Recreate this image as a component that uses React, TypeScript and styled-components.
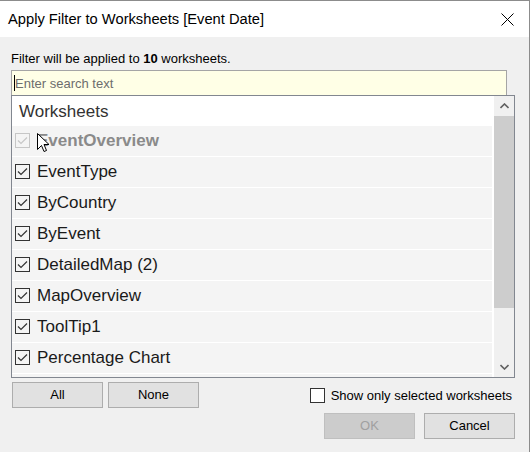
import React from "react";
import styled, { createGlobalStyle } from "styled-components";

const Global = createGlobalStyle`
  html, body { margin: 0; padding: 0; background: #ffffff; }
  body { font-family: "Liberation Sans", Arial, sans-serif; }
  * { box-sizing: border-box; }
`;

const Window = styled.div`
  width: 530px;
  height: 452px;
  border-top: 1px solid #8c8c8c;
  border-right: 1px solid #8c8c8c;
  display: flex;
  flex-direction: column;
  background: #ffffff;
`;

const TitleBar = styled.div`
  height: 36px;
  flex-shrink: 0;
  display: flex;
  align-items: center;
  justify-content: space-between;
  padding-left: 8px;
  background: #ffffff;
  color: #000;
  font-size: 14.7px;
`;

const CloseButton = styled.div`
  width: 44px;
  height: 36px;
  display: flex;
  align-items: center;
  justify-content: center;
`;

const Body = styled.div`
  flex: 1;
  background: #f0f0f0;
  padding: 14px 14px 0 11px;
  display: flex;
  flex-direction: column;
`;

const Info = styled.div`
  font-size: 13px;
  line-height: 16px;
  color: #000;
  margin-bottom: 3px;
  b { font-weight: bold; }
`;

const Search = styled.div`
  height: 26px;
  margin-right: 8px;
  border: 1px solid #a5a5a5;
  background: #ffffe6;
  display: flex;
  align-items: center;
  padding-left: 2px;
  font-size: 13px;
`;

const Caret = styled.span`
  width: 1px;
  height: 16px;
  background: #000;
`;

const Placeholder = styled.span`
  color: #6d6d6d;
`;

const List = styled.div`
  position: relative;
  height: 283px;
  margin-top: -1px;
  border: 1px solid #828790;
  display: flex;
  overflow: hidden;
  background: #ffffff;
`;

const ListContent = styled.div`
  flex: 1;
  padding-right: 2px;
  display: flex;
  flex-direction: column;
  overflow: hidden;
  background: #ffffff;
`;

const Header = styled.div`
  height: 30px;
  flex-shrink: 0;
  display: flex;
  align-items: center;
  padding: 2px 0 0 7px;
  font-size: 17px;
  color: #333333;
  background: #ffffff;
`;

const Row = styled.div<{ $disabled?: boolean }>`
  height: 31px;
  flex-shrink: 0;
  display: flex;
  align-items: center;
  gap: 7px;
  padding: 0 0 0 3px;
  background: #f4f4f4;
  border-bottom: 1px solid #ffffff;
  font-size: 17px;
  color: ${(p) => (p.$disabled ? "#8a8a8a" : "#1a1a1a")};
  font-weight: ${(p) => (p.$disabled ? "bold" : "normal")};
`;

const Box = styled.span<{ $disabled?: boolean; $white?: boolean }>`
  width: 15px;
  height: 15px;
  flex-shrink: 0;
  margin-top: ${(p) => (p.$white ? "0" : "-2px")};
  border: 1px solid ${(p) => (p.$disabled ? "#c6c6c6" : "#333333")};
  background: ${(p) => (p.$white ? "#ffffff" : "transparent")};
  display: flex;
  align-items: center;
  justify-content: center;
`;

const ScrollBar = styled.div`
  width: 20px;
  flex-shrink: 0;
  background: #f0f0f0;
  display: flex;
  flex-direction: column;
`;

const ArrowBtn = styled.div`
  height: 20px;
  flex-shrink: 0;
  display: flex;
  align-items: center;
  justify-content: center;
`;

const Thumb = styled.div`
  height: 192px;
  background: #cdcdcd;
`;

const Spacer = styled.div`
  flex: 1;
`;

const Pointer = styled.svg`
  position: absolute;
  left: 25px;
  top: 37px;
`;

const Footer = styled.div`
  margin-top: 4px;
  display: flex;
  flex-direction: column;
  gap: 5px;
`;

const FooterRow = styled.div<{ $end?: boolean }>`
  display: flex;
  align-items: center;
  justify-content: ${(p) => (p.$end ? "flex-end" : "space-between")};
  padding-right: ${(p) => (p.$end ? "0" : "3px")};
  padding-left: ${(p) => (p.$end ? "0" : "1px")};
`;

const ButtonGroup = styled.div`
  display: flex;
  gap: 5px;
`;

const EndGroup = styled.div`
  display: flex;
  gap: 9px;
`;

const Button = styled.div<{ $disabled?: boolean }>`
  width: 91px;
  height: 26px;
  display: flex;
  align-items: center;
  justify-content: center;
  font-size: 13px;
  line-height: 16px;
  background: ${(p) => (p.$disabled ? "#cccccc" : "#e1e1e1")};
  border: 1px solid ${(p) => (p.$disabled ? "#bfbfbf" : "#adadad")};
  color: ${(p) => (p.$disabled ? "#a0a0a0" : "#000000")};
`;

const CheckLabel = styled.div`
  display: flex;
  align-items: center;
  gap: 6px;
  font-size: 13px;
  color: #000;
`;

const Check = ({ color }: { color: string }) => (
  <svg width="13" height="13" viewBox="0 0 13 13">
    <polyline points="2,6.5 5,9.5 11,3.5" fill="none" stroke={color} strokeWidth="1.2" />
  </svg>
);

const Chevron = ({ up }: { up?: boolean }) => (
  <svg width="9" height="6" viewBox="0 0 9 6">
    <polyline
      points={up ? "0.5,5 4.5,1 8.5,5" : "0.5,1 4.5,5 8.5,1"}
      fill="none"
      stroke="#606060"
      strokeWidth="1.6"
    />
  </svg>
);

const items = [
  "EventType",
  "ByCountry",
  "ByEvent",
  "DetailedMap (2)",
  "MapOverview",
  "ToolTip1",
  "Percentage Chart",
];

export default function App() {
  return (
    <>
      <Global />
      <Window>
        <TitleBar>
          <span>Apply Filter to Worksheets [Event Date]</span>
          <CloseButton>
            <svg width="13" height="13" viewBox="0 0 13 13">
              <path d="M0.5 0.5 L12.5 12.5 M12.5 0.5 L0.5 12.5" stroke="#000" strokeWidth="1" />
            </svg>
          </CloseButton>
        </TitleBar>
        <Body>
          <Info>
            Filter will be applied to <b>10</b> worksheets.
          </Info>
          <Search>
            <Caret />
            <Placeholder>Enter search text</Placeholder>
          </Search>
          <List>
            <ListContent>
              <Header>Worksheets</Header>
              <Row $disabled>
                <Box $disabled>
                  <Check color="#c6c6c6" />
                </Box>
                <span>EventOverview</span>
              </Row>
              {items.map((it) => (
                <Row key={it}>
                  <Box>
                    <Check color="#333333" />
                  </Box>
                  <span>{it}</span>
                </Row>
              ))}
              <Row />
            </ListContent>
            <ScrollBar>
              <ArrowBtn>
                <Chevron up />
              </ArrowBtn>
              <Thumb />
              <Spacer />
              <ArrowBtn>
                <Chevron />
              </ArrowBtn>
            </ScrollBar>
            <Pointer width="13" height="21" viewBox="0 0 13 21">
              <path
                d="M0.5 0.5 L0.5 16.5 L4.5 12.5 L7 18.5 L9.5 17.5 L7 11.5 L12 11.5 Z"
                fill="#ffffff"
                stroke="#000000"
                strokeWidth="1"
              />
            </Pointer>
          </List>
          <Footer>
            <FooterRow>
              <ButtonGroup>
                <Button>All</Button>
                <Button>None</Button>
              </ButtonGroup>
              <CheckLabel>
                <Box $white />
                <span>Show only selected worksheets</span>
              </CheckLabel>
            </FooterRow>
            <FooterRow $end>
              <EndGroup>
                <Button $disabled>OK</Button>
                <Button>Cancel</Button>
              </EndGroup>
            </FooterRow>
          </Footer>
        </Body>
      </Window>
    </>
  );
}
